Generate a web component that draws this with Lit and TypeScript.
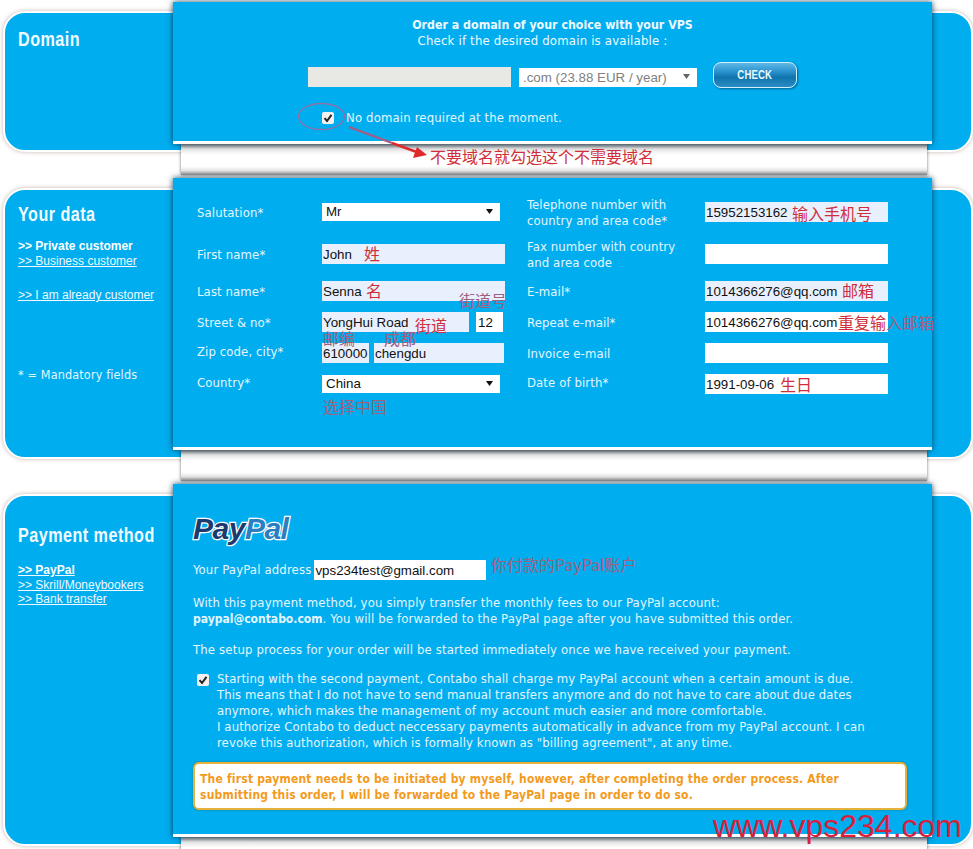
import { LitElement, html, css } from "lit";
import { customElement } from "lit/decorators.js";

const NOTES: [string, number, number, boolean][] = [
  ["不要域名就勾选这个不需要域名", 430, 147, true],
  ["输入手机号", 792, 204, true],
  ["姓", 364, 244, true],
  ["名", 366, 281, true],
  ["街道号", 459, 291, false],
  ["街道", 415, 316, true],
  ["邮编", 323, 329, false],
  ["成都", 384, 329, false],
  ["选择中国", 323, 397, false],
  ["邮箱", 842, 281, true],
  ["重复输", 838, 313, true],
  ["入邮箱", 886, 313, false],
  ["生日", 780, 375, true],
  ["你付款的PayPal账户", 491, 555, false],
];

@customElement("app-root")
export class AppRoot extends LitElement {
  static styles = css`
    :host { display: block; position: relative; width: 973px; height: 849px; overflow: hidden; background: #fff;
      font-family: "DejaVu Sans Condensed", "DejaVu Sans", sans-serif; font-size: 13px; letter-spacing: .15px; color: #e4f6ff; }
    .sec { display: flex; margin-left: 3px; width: 970px; box-sizing: border-box; border: 2px solid #fff; border-radius: 22px;
      background: #00adef; box-shadow: 0 0 4px rgba(120,90,80,.45); }
    .s1 { margin-top: 11px; }
    .s2 { margin-top: 36px; }
    .s3 { margin-top: 35px; }
    .side { width: 168px; flex: none; box-sizing: border-box; padding-left: 13px; }
    .col { width: 759px; flex: none; position: relative; }
    .s1 .col { margin-top: -11px; margin-bottom: -28px; }
    .s2 .col { margin-top: -12px; margin-bottom: -27px; }
    .s3 .col { margin-top: -12px; margin-bottom: -27px; }
    .main { position: relative; z-index: 1; box-sizing: border-box; background: #00adef; border-bottom: 3px solid #fff;
      box-shadow: 0 0 6px rgba(0,40,70,.85); }
    .s1 .main { height: 142px; }
    .s2 .main { height: 272px; }
    .s3 .main { height: 353px; }
    .strip { margin: 0 5px 3px 8px; height: 31px; background: linear-gradient(#8f8f8f 0, #e8e8e8 16%, #fff 35%, #fff 72%, #e4e4e4 86%, #8a8a8a 100%);
      box-shadow: 0 0 3px rgba(0,0,0,.55); }
    h2 { margin: 0; font: bold 21px/24px "Liberation Sans", Arial, sans-serif; letter-spacing: .6px; color: #f2fbff;
      white-space: nowrap; transform: scaleX(.77); transform-origin: left center; }
    .s1 h2 { margin-top: 14px; }
    .s2 h2 { margin-top: 12px; }
    .s3 h2 { margin-top: 27px; }
    .links { font: 12px/14.5px "Liberation Sans", Arial, sans-serif; letter-spacing: 0; display: flex; flex-direction: column; align-items: flex-start; }
    .links a { color: #f0faff; text-decoration: underline; }
    .links b { color: #fff; }
    .s2 .links { margin-top: 13px; }
    .s3 .links { margin-top: 16px; }
    .links .gap { margin-top: 20px; }
    .mand { margin-top: 64px; line-height: 15px; font-size: 12.5px; }

    .dom { padding-top: 15px; text-align: center; line-height: 16px; font-size: 13px; letter-spacing: .2px; color: #eefaff; }
    .dom b { display: block; font-size: 12.3px; letter-spacing: 0; }
    .dom span { display: block; padding-right: 20px; }
    .domrow { display: flex; justify-content: center; align-items: flex-start; margin-top: 13px; }
    .domin { width: 203px; height: 20px; margin-top: 5px; background: #e8e8e4; }
    .check { width: 84px; height: 26px; box-sizing: border-box; border: 1px solid #d0f0ff; border-radius: 8px; text-align: center;
      font: bold 12px/24px "Liberation Sans", sans-serif; color: #e8f8ff;
      background: linear-gradient(#5fb8e6 0, #2b93cf 35%, #0f74ad 60%, #2c8cc4 100%); box-shadow: 1px 1px 2px rgba(0,50,80,.6); }
    .check span { display: inline-block; transform: scaleX(.8); }
    .nodom { display: flex; align-items: center; gap: 12px; margin: 22px 0 0 149px; }

    .cb { width: 12px; height: 12px; flex: none; display: block; background: #f4f0ee; border-radius: 2px; }

    .form { display: grid; padding: 14px 0 0 24px; align-items: center; line-height: 16px; letter-spacing: .1px;
      grid-template-columns: 125px 183px 22px 178px 183px; grid-template-rows: 40px 44px 30px 32px 30px 32px; }
    .form > span { padding-top: 2px; }
    .form > span.up { padding-top: 0; padding-bottom: 2px; }
    .form .pad { grid-column: 3; }
    .in { display: block; box-sizing: border-box; height: 20px; width: 183px; border: 0; padding: 0 1px; margin: 0; outline: 0;
      font: 13.33px "Liberation Sans", Arial, sans-serif; letter-spacing: 0; color: #111; background: #fff; }
    .auto { background: #e8f0fe; }
    .pair { display: flex; }
    .sel { position: relative; box-sizing: border-box; display: block; width: 178px; height: 18px; padding-left: 4px; background: #fff;
      font: 13.33px/18px "Liberation Sans", Arial, sans-serif; letter-spacing: 0; color: #111; }
    .sel svg { position: absolute; right: 7px; top: 6px; }
    .sel.domsel { margin: 6px 16px 0 8px; height: 19px; line-height: 19px; color: #808080; }

    .pay { padding: 29px 25px 0 20px; line-height: 16px; }
    .logo { height: 32px; font: italic bold 30px/32px "Liberation Sans", Arial, sans-serif; letter-spacing: -.5px;
      -webkit-text-stroke: 2.5px #fff; paint-order: stroke fill; color: #1c3a6e; }
    .logo span { color: #2d7ec0; }
    .addr { display: flex; align-items: center; gap: 3px; margin-top: 15px; }
    .addr .in { width: 172px; height: 20px; }
    .pay p { margin: 15px 0 0; }
    .pay p b { font-size: 12px; letter-spacing: 0; }
    .opt { display: flex; gap: 8px; margin: 13px 0 0 4px; letter-spacing: .1px; }
    .opt .cb { margin-top: 3px; }
    .warn { margin-top: 11px; box-sizing: border-box; width: 714px; height: 48px; padding: 7px 5px 5px; border: 2px solid #e5b23c; border-radius: 6px;
      background: #fff; color: #f39a1c; font-weight: bold; font-size: 12px; letter-spacing: .2px; box-shadow: 0 0 2px rgba(90,70,0,.5); }

    .note { position: absolute; z-index: 3; white-space: nowrap; font: 16px/18px "Noto Sans CJK SC", sans-serif; letter-spacing: 0; color: #cf2f3a; }
    .muted { color: #a2607f; }
    .anno { position: absolute; left: 0; top: 0; z-index: 3; }
    .wm { position: absolute; z-index: 3; left: 713px; top: 809px; font: 32px/34px "Liberation Sans", Arial, sans-serif; letter-spacing: 0; color: #d8203c; white-space: nowrap; }
  `;

  private cb() {
    return html`<span class="cb"><svg width="12" height="12" viewBox="0 0 12 12"><path d="M2.5 6.2 5 9 9.5 2.8" fill="none" stroke="#222" stroke-width="2"/></svg></span>`;
  }
  private arrow() {
    return html`<svg width="7" height="5" viewBox="0 0 7 5"><path d="M0 0h7L3.5 5z" fill="#111"/></svg>`;
  }
  private strip() {
    return html`<div class="strip"></div>`;
  }

  render() {
    return html`
      <section class="sec s1">
        <div class="side"><h2>Domain</h2></div>
        <div class="col">
          <div class="main">
            <div class="dom"><b>Order a domain of your choice with your VPS</b><span>Check if the desired domain is available :</span></div>
            <div class="domrow">
              <div class="domin"></div>
              <div class="sel domsel">.com (23.88 EUR / year)<svg width="7" height="5" viewBox="0 0 7 5"><path d="M0 0h7L3.5 5z" fill="#666"/></svg></div>
              <div class="check"><span>CHECK</span></div>
            </div>
            <div class="nodom">${this.cb()}<span>No domain required at the moment.</span></div>
          </div>
          ${this.strip()}
        </div>
      </section>

      <section class="sec s2">
        <div class="side">
          <h2>Your data</h2>
          <div class="links">
            <b>&gt;&gt; Private customer</b>
            <a>&gt;&gt; Business customer</a>
            <a class="gap">&gt;&gt; I am already customer</a>
          </div>
          <div class="mand">* = Mandatory fields</div>
        </div>
        <div class="col">
          <div class="main">
            <div class="form">
              <span>Salutation*</span><div class="sel">Mr${this.arrow()}</div><i class="pad"></i>
              <span>Telephone number with<br />country and area code*</span><input class="in auto" value="15952153162" />
              <span>First name*</span><input class="in auto" value="John" /><i class="pad"></i>
              <span>Fax number with country<br />and area code</span><input class="in" />
              <span>Last name*</span><input class="in auto" value="Senna" /><i class="pad"></i>
              <span>E-mail*</span><input class="in auto" value="1014366276@qq.com" />
              <span>Street &amp; no*</span>
              <div class="pair"><input class="in auto" style="width:147px" value="YongHui Road" /><input class="in" style="width:27px;margin-left:7px;padding-left:2px" value="12" /></div><i class="pad"></i>
              <span>Repeat e-mail*</span><input class="in" value="1014366276@qq.com" />
              <span class="up">Zip code, city*</span>
              <div class="pair"><input class="in auto" style="width:47px" value="610000" /><input class="in auto" style="width:130px;margin-left:5px" value="chengdu" /></div><i class="pad"></i>
              <span>Invoice e-mail</span><input class="in" />
              <span class="up">Country*</span><div class="sel">China${this.arrow()}</div><i class="pad"></i>
              <span class="up">Date of birth*</span><input class="in" value="1991-09-06" />
            </div>
          </div>
          ${this.strip()}
        </div>
      </section>

      <section class="sec s3">
        <div class="side">
          <h2>Payment method</h2>
          <div class="links">
            <a><b>&gt;&gt; PayPal</b></a>
            <a>&gt;&gt; Skrill/Moneybookers</a>
            <a>&gt;&gt; Bank transfer</a>
          </div>
        </div>
        <div class="col">
          <div class="main">
            <div class="pay">
              <div class="logo">Pay<span>Pal</span></div>
              <div class="addr">Your PayPal address <input class="in" value="vps234test@gmail.com" /></div>
              <p>With this payment method, you simply transfer the monthly fees to our PayPal account:<br />
                <b>paypal@contabo.com</b>. You will be forwarded to the PayPal page after you have submitted this order.</p>
              <p>The setup process for your order will be started immediately once we have received your payment.</p>
              <div class="opt">${this.cb()}
                <div>Starting with the second payment, Contabo shall charge my PayPal account when a certain amount is due.<br />
                  This means that I do not have to send manual transfers anymore and do not have to care about due dates<br />
                  anymore, which makes the management of my account much easier and more comfortable.<br />
                  I authorize Contabo to deduct neccessary payments automatically in advance from my PayPal account. I can<br />
                  revoke this authorization, which is formally known as "billing agreement", at any time.</div>
              </div>
              <div class="warn">The first payment needs to be initiated by myself, however, after completing the order process. After<br />
                submitting this order, I will be forwarded to the PayPal page in order to do so.</div>
            </div>
          </div>
          ${this.strip()}
        </div>
      </section>

      <svg class="anno" width="973" height="200" viewBox="0 0 973 200">
        <ellipse cx="321.5" cy="116.5" rx="23" ry="13" fill="none" stroke="#8f6fa6" stroke-width="1.3"/>
        <path d="M349 127 392 143" stroke="#a85a80" stroke-width="2.4" fill="none"/>
        <path d="M392 143 418 152.5" stroke="#e02a2a" stroke-width="2.4" fill="none"/>
        <path d="M427 155 413 158 417 147z" fill="#e02a2a"/>
      </svg>
      ${NOTES.map(([t, x, y, solid]) => html`<span class="note ${solid ? "" : "muted"}" style="left:${x}px;top:${y}px">${t}</span>`)}
      <div class="wm">www.vps234.com</div>
    `;
  }
}
